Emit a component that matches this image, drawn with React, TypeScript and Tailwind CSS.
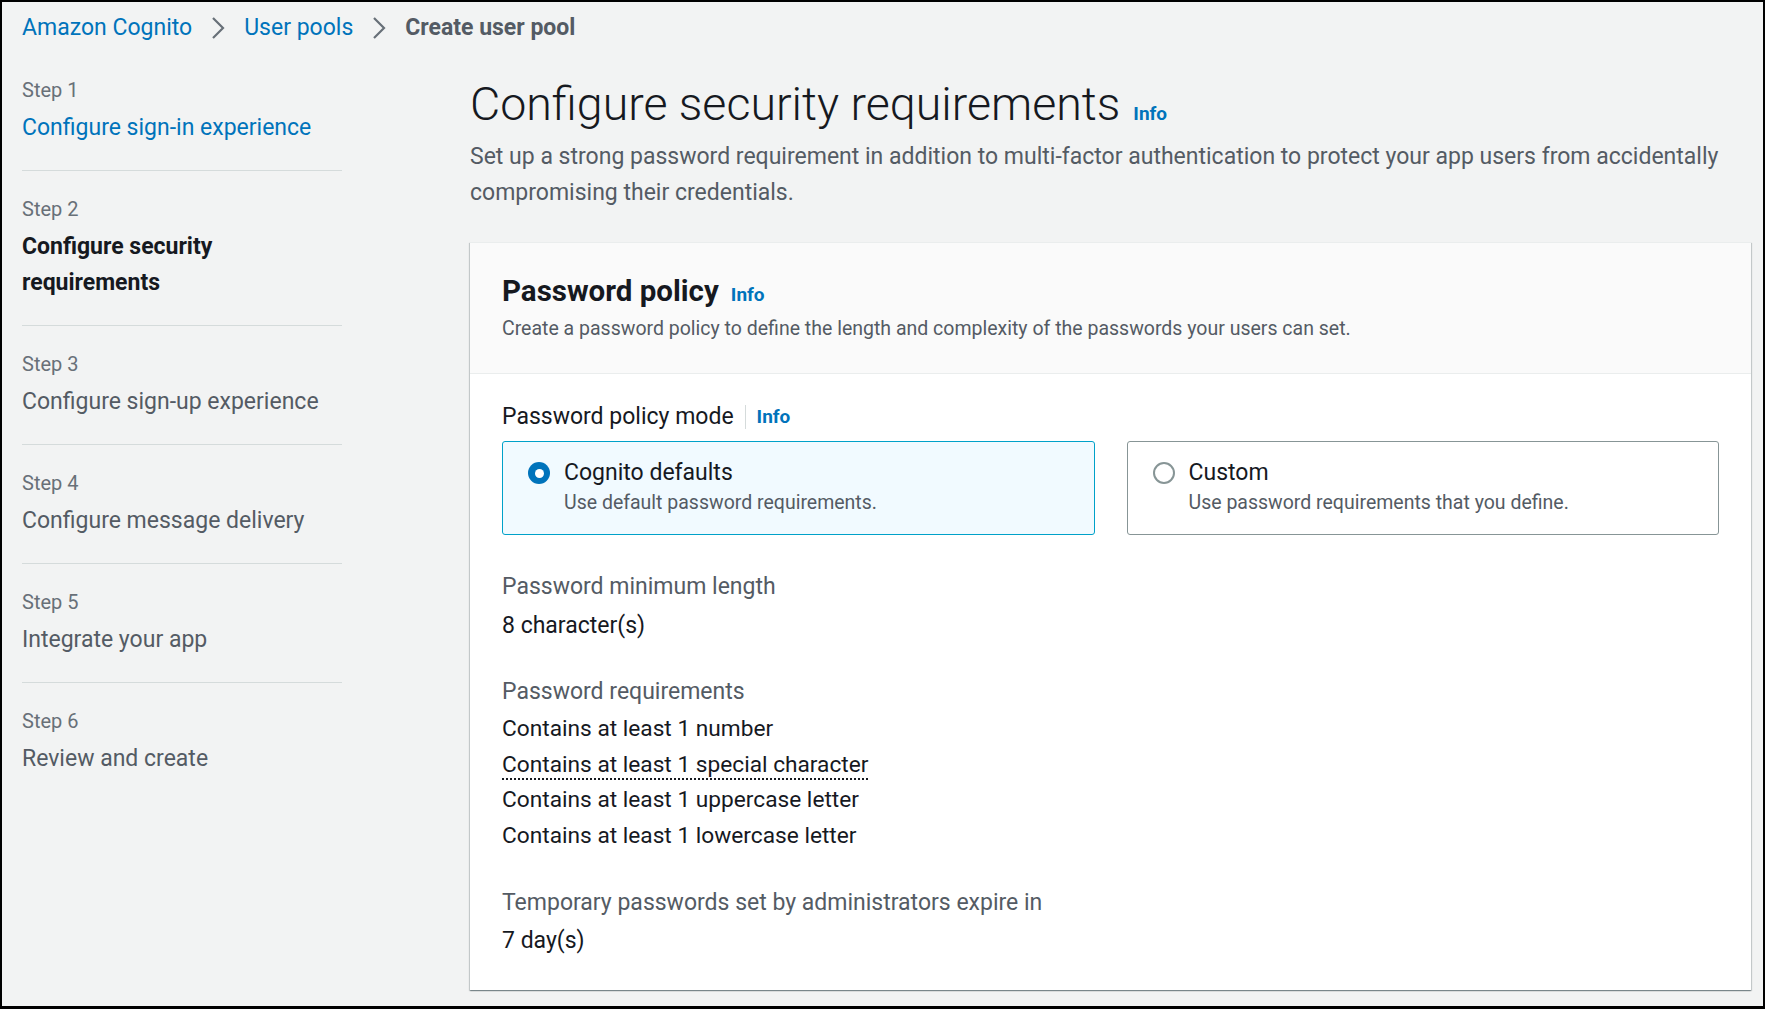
import { Fragment } from "react";

type Step = {
  label: string;
  title: string;
  state: "done" | "current" | "todo";
};

const steps: Step[] = [
  { label: "Step 1", title: "Configure sign-in experience", state: "done" },
  { label: "Step 2", title: "Configure security requirements", state: "current" },
  { label: "Step 3", title: "Configure sign-up experience", state: "todo" },
  { label: "Step 4", title: "Configure message delivery", state: "todo" },
  { label: "Step 5", title: "Integrate your app", state: "todo" },
  { label: "Step 6", title: "Review and create", state: "todo" },
];

const requirements = [
  "Contains at least 1 number",
  "Contains at least 1 special character",
  "Contains at least 1 uppercase letter",
  "Contains at least 1 lowercase letter",
];

function Chevron() {
  return (
    <svg width="14" height="22" viewBox="0 0 14 22" className="mx-[19px] shrink-0">
      <polyline points="2,1 12,11 2,21" fill="none" stroke="#687078" strokeWidth="2.2" />
    </svg>
  );
}

function Info({ className = "" }: { className?: string }) {
  return <span className={`font-bold text-[#0073bb] ${className}`}>Info</span>;
}

function Radio({ checked }: { checked: boolean }) {
  return checked ? (
    <span className="grid size-[22px] shrink-0 place-items-center rounded-full bg-[#0073bb]">
      <span className="size-[9px] rounded-full bg-white" />
    </span>
  ) : (
    <span className="size-[22px] shrink-0 rounded-full border-2 border-[#879596] bg-white" />
  );
}

function Tile({ title, desc, checked }: { title: string; desc: string; checked: boolean }) {
  return (
    <div
      className={`flex h-[94px] gap-[14px] rounded-[3px] border px-[25px] pt-[15px] ${
        checked ? "border-[#00a1c9] bg-[#f1faff]" : "border-[#879596] bg-white"
      }`}
    >
      <div className="flex h-[32px] items-center">
        <Radio checked={checked} />
      </div>
      <div>
        <p className="text-[23px] leading-[32px] text-[#16191f]">{title}</p>
        <p className="text-[19.5px] leading-[28px] text-[#545b64]">{desc}</p>
      </div>
    </div>
  );
}

export default function App() {
  return (
    <div
      className="box-border flex h-[1009px] w-full flex-col overflow-hidden border-x-2 border-t-2 border-b-[3px] border-black bg-[#f2f3f3] text-[#16191f]"
      style={{ fontFamily: "Roboto, 'Liberation Sans', sans-serif" }}
    >
      <nav className="flex h-[35px] items-center px-[20px] pt-[16px] text-[23px] leading-[35px]">
        <span className="text-[#0073bb]">Amazon Cognito</span>
        <Chevron />
        <span className="text-[#0073bb]">User pools</span>
        <Chevron />
        <span className="font-bold text-[#545b64]">Create user pool</span>
      </nav>

      <div className="flex flex-1 pt-[39px]">
        <aside className="ml-[20px] w-[320px] shrink-0">
          {steps.map((step, i) => (
            <Fragment key={step.label}>
              {i > 0 && <div className="h-px bg-[#d5dbdb]" />}
              <div className={`${i > 0 ? "pt-[24px]" : ""} pb-[24px]`}>
                <p className="text-[20px] leading-[28px] text-[#687078]">{step.label}</p>
                <p
                  className={`mt-[6px] text-[23px] leading-[36px] ${
                    step.state === "done"
                      ? "text-[#0073bb]"
                      : step.state === "current"
                        ? "w-[240px] font-bold text-[#16191f]"
                        : "text-[#545b64]"
                  }`}
                >
                  {step.title}
                </p>
              </div>
            </Fragment>
          ))}
        </aside>

        <main className="mr-[12px] ml-[128px] flex-1">
          <div className="flex items-baseline gap-[13px]">
            <h1 className="text-[46.5px] leading-[56px] font-light">Configure security requirements</h1>
            <Info className="text-[19px]" />
          </div>
          <p className="mt-[7px] text-[23px] leading-[36px] text-[#545b64]">
            Set up a strong password requirement in addition to multi-factor authentication to protect your app users from accidentally
            compromising their credentials.
          </p>

          <section className="mt-[31px] border-t border-[#eaeded] bg-white shadow-[0_1px_1px_0_rgba(0,28,36,0.3),1px_1px_1px_0_rgba(0,28,36,0.15),-1px_1px_1px_0_rgba(0,28,36,0.15)]">
            <header className="border-b border-[#eaeded] bg-[#fafafa] px-[32px] pt-[28px] pb-[30px]">
              <div className="flex items-baseline gap-[12px]">
                <h2 className="text-[29.5px] leading-[40px] font-bold">Password policy</h2>
                <Info className="text-[19px]" />
              </div>
              <p className="mt-[4px] text-[19.5px] leading-[28px] text-[#545b64]">
                Create a password policy to define the length and complexity of the passwords your users can set.
              </p>
            </header>

            <div className="px-[32px] pt-[27px] pb-[32px]">
              <div className="flex items-center text-[23px] leading-[32px]">
                <span>Password policy mode</span>
                <span className="mx-[11px] h-[24px] w-px bg-[#d5dbdb]" />
                <Info className="text-[19px]" />
              </div>
              <div className="mt-[8px] grid grid-cols-2 gap-[32px]">
                <Tile title="Cognito defaults" desc="Use default password requirements." checked />
                <Tile title="Custom" desc="Use password requirements that you define." checked={false} />
              </div>

              <div className="mt-[36px]">
                <p className="text-[23px] leading-[32px] text-[#545b64]">Password minimum length</p>
                <p className="mt-[5px] text-[23px] leading-[35px]">8 character(s)</p>
              </div>

              <div className="mt-[33px]">
                <p className="text-[23px] leading-[32px] text-[#545b64]">Password requirements</p>
                <ul className="mt-[3px]">
                  {requirements.map((r, i) => (
                    <li key={r} className="text-[22.7px] leading-[35.5px]">
                      <span className={i === 1 ? "border-b-2 border-dotted border-[#16191f]" : ""}>{r}</span>
                    </li>
                  ))}
                </ul>
              </div>

              <div className="mt-[34px]">
                <p className="text-[23px] leading-[32px] text-[#545b64]">Temporary passwords set by administrators expire in</p>
                <p className="mt-[4px] text-[23px] leading-[35px]">7 day(s)</p>
              </div>
            </div>
          </section>
        </main>
      </div>
    </div>
  );
}
